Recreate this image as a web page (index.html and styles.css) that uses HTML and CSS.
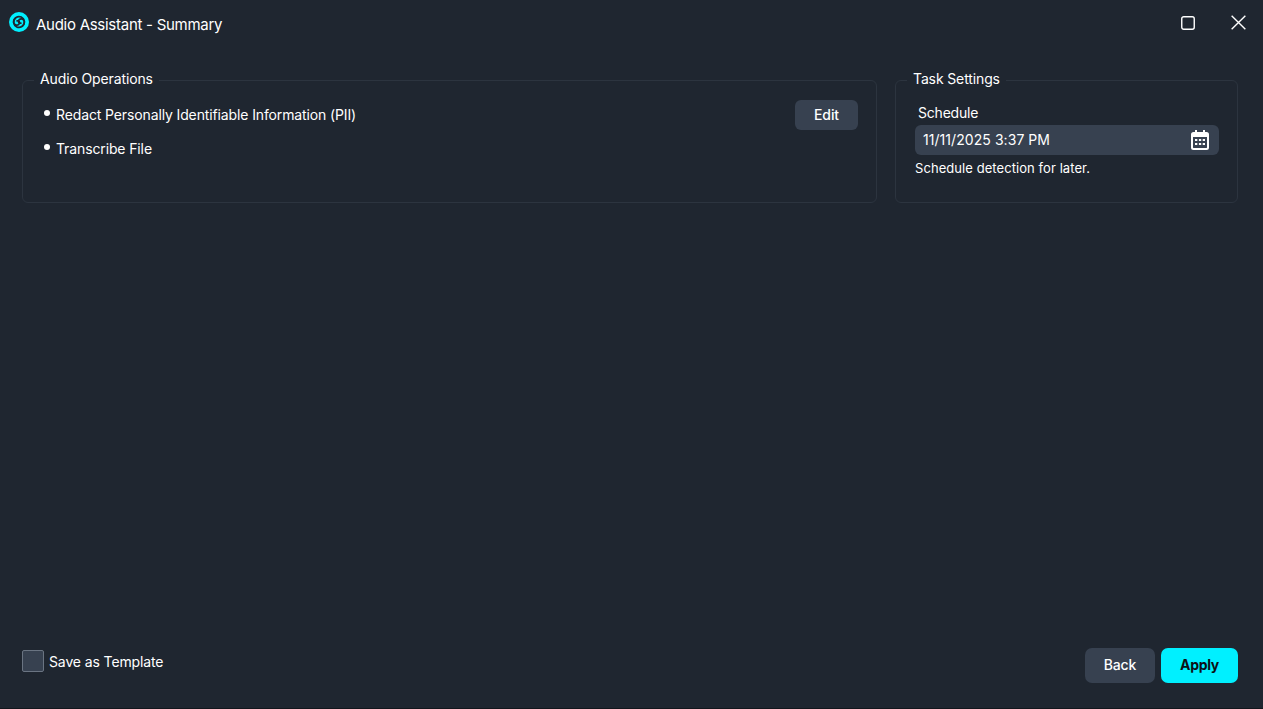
FILE: index.html
```html
<!DOCTYPE html>
<html lang="en">
<head>
<meta charset="utf-8">
<title>Audio Assistant - Summary</title>
<link rel="stylesheet" href="styles.css">
</head>
<body>
<div class="app">
  <header class="titlebar">
    <svg class="logo" viewBox="0 0 20 20" aria-hidden="true">
      <circle cx="10" cy="10" r="10" fill="#00f0ff"/>
      <path d="M13.500 14.100A5.400 5.400 0 1 0 4.600 10C4.600 13 8 14 9.800 12.300C11.500 10.700 10 8.200 8.100 8.900" fill="none" stroke="#1f2630" stroke-width="1.700" stroke-linecap="round"/>
      <path d="M6.500 5.900A5.400 5.400 0 1 0 15.400 10C15.400 7 12 6 10.200 7.700C8.500 9.300 10 11.800 11.900 11.100" fill="none" stroke="#1f2630" stroke-width="1.700" stroke-linecap="round"/>
    </svg>
    <h1 class="title">Audio Assistant - Summary</h1>
    <div class="window-controls">
      <svg class="win-icon" viewBox="0 0 14 14" aria-hidden="true"><rect x="0.75" y="0.75" width="12.5" height="12.5" rx="2" fill="none" stroke="#fff" stroke-width="1.4"/></svg>
      <svg class="win-icon close" viewBox="0 0 14 14" aria-hidden="true"><path d="M0.6 0.6 13.4 13.4M13.4 0.6 0.6 13.4" fill="none" stroke="#fff" stroke-width="1.3"/></svg>
    </div>
  </header>
  <main class="panels">
    <fieldset class="panel panel-ops">
      <legend class="panel-legend">Audio Operations</legend>
      <ul class="op-list">
        <li>Redact Personally Identifiable Information (PII)</li>
        <li>Transcribe File</li>
      </ul>
      <button class="btn btn-edit" type="button">Edit</button>
    </fieldset>
    <fieldset class="panel panel-task">
      <legend class="panel-legend">Task Settings</legend>
      <div class="field-label">Schedule</div>
      <div class="date-input">
        <span class="date-value">11/11/2025 3:37 PM</span>
        <svg class="cal-icon" viewBox="0 0 18 20" aria-hidden="true">
          <path fill="#fff" fill-rule="evenodd" d="M4 0h2v2h6V0h2v2h1.500A2.500 2.500 0 0 1 18 4.500v13a2.500 2.500 0 0 1-2.500 2.500h-13A2.500 2.500 0 0 1 0 17.500v-13A2.500 2.500 0 0 1 2.500 2H4V0ZM2 7v10.500c0 .3.200.5.500.5h13c.3 0 .5-.2.5-.5V7H2Z"/>
          <path fill="#fff" d="M4 9h2.300v2H4zM7.900 9h2.300v2H7.900zM11.700 9H14v2h-2.300zM4 13h2.300v2H4zM7.900 13h2.300v2H7.900zM11.700 13H14v2h-2.300z"/>
        </svg>
      </div>
      <p class="hint">Schedule detection for later.</p>
    </fieldset>
  </main>
  <footer class="footer">
    <label class="check">
      <span class="checkbox"></span>
      <span class="check-text">Save as Template</span>
    </label>
    <div class="actions">
      <button class="btn btn-back" type="button">Back</button>
      <button class="btn btn-apply" type="button">Apply</button>
    </div>
  </footer>
</div>
</body>
</html>
```

FILE: styles.css
```css
* { box-sizing: border-box; }
html, body { margin: 0; height: 100%; overflow: hidden; }
body {
  background: #1f2630;
  color: #fff;
  font-family: Inter, "Liberation Sans", sans-serif;
  font-size: 14px;
  letter-spacing: -0.125px;
}
.app {
  height: 709px;
  display: flex;
  flex-direction: column;
  border-bottom: 1px solid #12161c;
}
.titlebar {
  height: 48px;
  flex: none;
  display: flex;
  align-items: center;
  padding: 0 17px 0 9px;
}
.logo { width: 20px; height: 20px; margin-top: -4px; flex: none; }
.title {
  margin: 2px 0 0 7px;
  font-size: 15px;
  font-weight: 400;
  line-height: 18px;
  letter-spacing: -0.27px;
}
.window-controls {
  margin-left: auto;
  display: flex;
  align-items: center;
  gap: 36px;
  margin-top: -3px;
}
.win-icon { width: 14px; height: 14px; display: block; }
.close { width: 15px; height: 15px; }
.panels {
  flex: 1;
  display: flex;
  align-items: flex-start;
  gap: 18px;
  padding: 23px 25px 0 22px;
}
.panel {
  margin: 0;
  min-width: 0;
  border: 1px solid #2c343f;
  border-radius: 6px;
  height: 132px;
  position: relative;
}
.panel-ops { width: 855px; padding: 0 18px 0 17px; display: flex; }
.panel-task { width: 343px; padding: 0 18px 0 19px; }
.panel-legend {
  margin-left: -6px;
  padding: 0 6px 2px;
  font-size: 14px;
  line-height: 16px;
}
.panel-task .panel-legend { margin-left: -8px; }
.op-list {
  list-style: none;
  margin: 0;
  padding: 0;
}
.op-list li {
  position: relative;
  padding-left: 16px;
  line-height: 18px;
  margin-top: 17px;
  margin-bottom: -1px;
}
.op-list li::before {
  content: "";
  position: absolute;
  left: 4px;
  top: 4px;
  width: 6px;
  height: 6px;
  border-radius: 50%;
  background: #fff;
}
.btn {
  border: 0;
  border-radius: 6px;
  color: #fff;
  font-family: inherit;
  font-size: 14px;
  font-weight: 500;
  letter-spacing: -0.125px;
  padding: 0 0 1px;
}
.btn-edit {
  width: 63px;
  height: 30px;
  margin-left: auto;
  margin-top: 11px;
  background: #374150;
}
.field-label {
  margin: 15px 0 0 3px;
  line-height: 18px;
  letter-spacing: -0.2px;
}
.date-input {
  margin-top: 3px;
  height: 30px;
  border-radius: 6px;
  background: #374150;
  display: flex;
  align-items: center;
  justify-content: space-between;
  padding: 0 10px 0 8px;
}
.date-value {
  padding-bottom: 2px;
  letter-spacing: 0.06px;
}
.cal-icon { width: 18px; height: 20px; display: block; }
.hint {
  margin: 4px 0 0;
  font-size: 13px;
  line-height: 18px;
  letter-spacing: 0.07px;
}
.footer {
  flex: none;
  height: 60px;
  display: flex;
  justify-content: space-between;
  align-items: flex-start;
  padding: 0 25px 0 22px;
}
.check {
  display: flex;
  align-items: center;
  gap: 5px;
  margin-top: 2px;
}
.check-text { letter-spacing: -0.12px; }
.checkbox {
  width: 22px;
  height: 22px;
  border: 1px solid #6a7482;
  border-radius: 2px;
  background: #374150;
}
.actions { display: flex; gap: 6px; }
.btn-back, .btn-apply { height: 35px; border-radius: 7px; padding-bottom: 3px; }
.btn-back { width: 70px; background: #374150; }
.btn-apply { width: 77px; background: #00f0ff; color: #0d1116; font-weight: 700; letter-spacing: -0.3px; }
```
